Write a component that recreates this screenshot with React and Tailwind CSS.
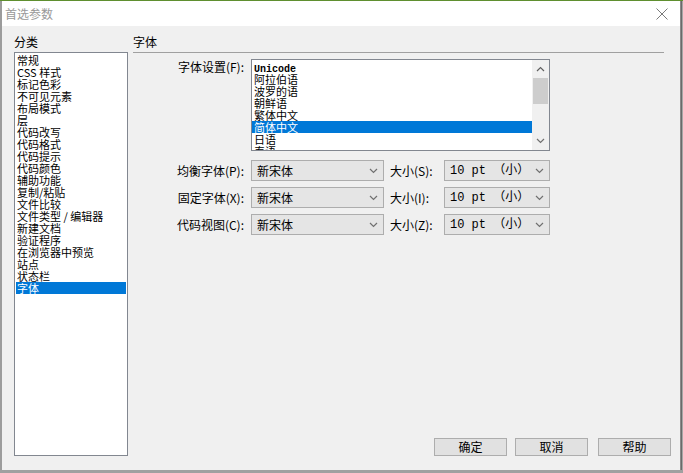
import React from "react";

const categories = [
  "常规",
  "CSS 样式",
  "标记色彩",
  "不可见元素",
  "布局模式",
  "层",
  "代码改写",
  "代码格式",
  "代码提示",
  "代码颜色",
  "辅助功能",
  "复制/粘贴",
  "文件比较",
  "文件类型 / 编辑器",
  "新建文档",
  "验证程序",
  "在浏览器中预览",
  "站点",
  "状态栏",
  "字体",
];

const encodings = ["Unicode", "阿拉伯语", "波罗的语", "朝鲜语", "繁体中文", "简体中文", "日语", "泰语"];

const fontRows = [
  { label: "均衡字体(P):", size: "大小(S):" },
  { label: "固定字体(X):", size: "大小(I):" },
  { label: "代码视图(C):", size: "大小(Z):" },
];

const cjk = { fontFamily: '"Noto Sans CJK SC", "Noto Sans", sans-serif' };
const mono = { fontFamily: '"Liberation Mono", "Noto Sans CJK SC", monospace' };

function Chevron({ up }) {
  return (
    <svg width="9" height="6" viewBox="0 0 9 6" className="shrink-0">
      <path
        d={up ? "M1 5 L4.5 1.5 L8 5" : "M1 1 L4.5 4.5 L8 1"}
        fill="none"
        stroke={up ? "#606060" : "#707070"}
        strokeWidth="1.2"
      />
    </svg>
  );
}

function Select({ width, children, isMono }) {
  return (
    <div
      className={`${width} h-[21px] border border-[#adadad] bg-[#e5e5e5] flex items-center pl-[5px] pr-[5px] text-[12px] leading-[12px] text-black`}
      style={isMono ? mono : cjk}
    >
      <span className="flex-1 whitespace-pre">{children}</span>
      <Chevron />
    </div>
  );
}

function Button({ children }) {
  return (
    <button
      className="w-[73px] h-[18px] border border-[#adadad] bg-[#e1e1e1] text-[12px] leading-[12px] text-black flex items-center justify-center"
      style={cjk}
    >
      {children}
    </button>
  );
}

export default function App() {
  return (
    <div className="w-[683px] h-[473px] bg-[#a6a6a6] flex flex-col overflow-hidden" style={cjk}>
      {/* desktop strip */}
      <div className="h-[1px] bg-[#5f8f2f] shrink-0" />

      <div className="flex shrink-0">
        <div className="w-[681px] h-[469px] flex flex-col border-l-2 border-r border-l-[#9c9c9c] border-r-[#8a8a8a]">
          {/* title bar */}
          <div className="h-[25px] bg-white flex items-center justify-between pl-[3px] pr-[12px] shrink-0">
            <span className="text-[12px] text-[#999999]">首选参数</span>
            <svg width="12" height="12" viewBox="0 0 12 12">
              <path d="M0.5 0.5 L11.5 11.5 M11.5 0.5 L0.5 11.5" stroke="#7a7a7a" strokeWidth="1" />
            </svg>
          </div>

          {/* body */}
          <div className="flex-1 bg-[#f0f0f0] flex pl-[12px] pb-[14px]">
            {/* categories */}
            <div className="w-[114px] flex flex-col shrink-0">
              <div className="h-[26px] pt-[9px] text-[12px] leading-[14px] text-black">分类</div>
              <div className="flex-1 border border-[#828790] bg-white p-[1px]">
                {categories.map((c) => (
                  <div
                    key={c}
                    className={`h-[12px] text-[11px] leading-[12px] px-[1px] whitespace-pre ${
                      c === "字体" ? "bg-[#0078d7] text-white" : "text-black"
                    }`}
                  >
                    {c}
                  </div>
                ))}
              </div>
            </div>

            {/* right panel */}
            <div className="w-[538px] ml-[5px] flex flex-col">
              <div className="h-[27px] mr-[7px] pt-[9px] border-b border-[#a0a0a0] text-[12px] leading-[14px] text-black">
                字体
              </div>

              {/* encoding list */}
              <div className="flex mt-[6px]">
                <div className="w-[111px] text-right pt-[1px] text-[12px] leading-[14px] text-black">字体设置(F):</div>
                <div className="ml-[7px] w-[299px] h-[92px] border border-[#828790] bg-white flex">
                  <div className="w-[280px] pt-[1px] overflow-hidden">
                    {encodings.map((e) => (
                      <div
                        key={e}
                        className={`h-[12px] text-[11px] leading-[12px] pl-[2px] ${
                          e === "简体中文" ? "bg-[#0078d7] text-white" : "text-black"
                        }`}
                      >
                        {e === "Unicode" ? (
                          <span className="text-[10px] font-bold" style={mono}>
                            Unicode
                          </span>
                        ) : (
                          e
                        )}
                      </div>
                    ))}
                  </div>
                  <div className="w-[17px] bg-[#f0f0f0] flex flex-col items-center">
                    <div className="h-[18px] flex items-center justify-center">
                      <Chevron up />
                    </div>
                    <div className="w-[15px] h-[26px] bg-[#cdcdcd]" />
                    <div className="flex-1" />
                    <div className="h-[18px] flex items-center justify-center">
                      <Chevron />
                    </div>
                  </div>
                </div>
              </div>

              {/* font rows */}
              <div className="flex flex-col gap-[6px] mt-[9px]">
                {fontRows.map((r) => (
                  <div key={r.label} className="flex items-center">
                    <div className="w-[111px] text-right text-[12px] leading-[14px] text-black">{r.label}</div>
                    <div className="ml-[7px]">
                      <Select width="w-[133px]">新宋体</Select>
                    </div>
                    <div className="w-[60px] pl-[6px] text-[12px] leading-[14px] text-black">{r.size}</div>
                    <Select width="w-[106px]" isMono>
                      {"10 pt （小）"}
                    </Select>
                  </div>
                ))}
              </div>

              {/* buttons */}
              <div className="mt-auto flex pl-[301px]">
                <Button>确定</Button>
                <div className="w-[8px]" />
                <Button>取消</Button>
                <div className="w-[10px]" />
                <Button>帮助</Button>
              </div>
            </div>
          </div>
        </div>
        <div className="w-[1px] bg-[#6a6a6a]" />
      </div>

      {/* desktop behind */}
      <div className="flex-1 bg-[#a0a0a0]" />
    </div>
  );
}
